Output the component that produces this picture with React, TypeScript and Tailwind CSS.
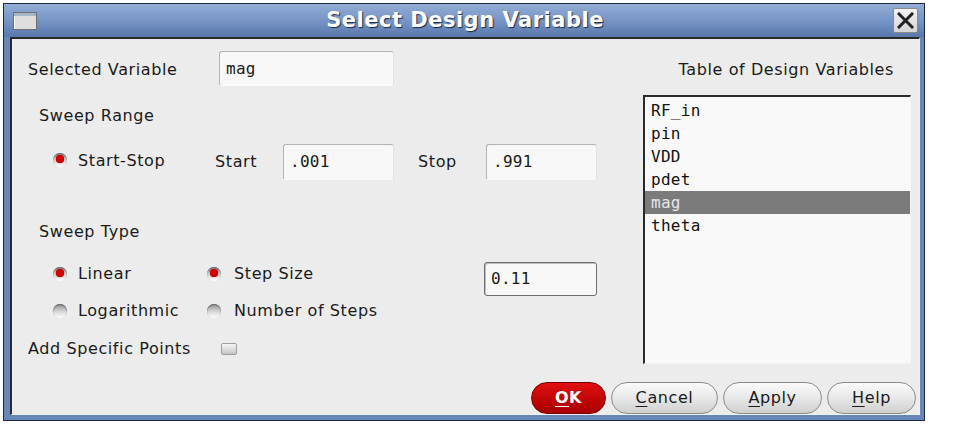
import React from 'react';

const mono = "font-['DejaVu_Sans_Mono','Liberation_Mono',monospace]";

function Radio({ checked }: { checked?: boolean }) {
  return (
    <span className="relative flex h-[14px] w-[14px] items-center justify-center rounded-full bg-linear-to-b from-[#8e8e8e] via-[#d2d2d2] to-white shadow-[inset_0_1px_1px_#666]">
      {checked && <span className="mb-[2px] h-[8px] w-[8px] rounded-full bg-[#d40000] shadow-[0_0_1px_#700]" />}
    </span>
  );
}

function Field({ value, width, dark }: { value: string; width: string; dark?: boolean }) {
  return (
    <div
      className={`${width} flex items-center rounded-[3px] bg-[#f8f8f8] pl-[6px] text-[16px] tracking-[0.3px] text-[#1a1a1a] ${mono} ${
        dark
          ? 'border border-[#6e6e6e] shadow-[inset_1px_1px_0_#bdbdbd]'
          : 'border border-t-[#b4b4b4] border-l-[#b4b4b4] border-r-[#e2e2e2] border-b-[#fafafa]'
      }`}
    >
      {value}
    </div>
  );
}

function Btn({ label, rest, width, primary }: { label: string; rest: string; width: string; primary?: boolean }) {
  return (
    <div
      className={`${width} flex h-[32px] items-center justify-center rounded-full text-[16px] tracking-[0.6px] ${
        primary
          ? 'border border-[#7a0000] bg-linear-to-b from-[#e01010] to-[#a80000] font-bold text-white'
          : 'border border-[#8c8c8c] bg-linear-to-b from-[#fafafa] via-[#e8e8e8] to-[#cfcfcf] text-[#1a1a1a]'
      }`}
    >
      <span className="underline underline-offset-[3px]">{label}</span>
      <span>{rest}</span>
    </div>
  );
}

export default function App() {
  const vars = ['RF_in', 'pin', 'VDD', 'pdet', 'mag', 'theta'];

  return (
    <div className="h-[424px] w-[968px] bg-white pl-[3px] pt-[3px] font-['DejaVu_Sans',sans-serif] text-[16px] tracking-[0.6px] text-[#1a1a1a]">
      <div className="flex h-[418px] w-[922px] flex-col border border-[#1e2a3c] bg-[#6887b9]">
        {/* title bar */}
        <div className="grid h-[33px] grid-cols-[33px_1fr_31px] items-center bg-linear-to-b from-[#93acd6] via-[#7895c6] to-[#5877ab]">
          <div className="ml-[9px] h-[18px] w-[24px] border border-[#6f6f6f] bg-[#dedede] shadow-[inset_1px_1px_0_#fff]">
            <div className="h-[3px] bg-[#a8b6cc]" />
          </div>
          <div className="text-center text-[21px] font-bold tracking-[0.5px] text-white [text-shadow:1px_1px_1px_#1b2a45]">
            Select Design Variable
          </div>
          <div className="flex h-[25px] w-[25px] items-center justify-center rounded-[2px] border border-[#8a8a8a] bg-linear-to-b from-[#f4f4f4] to-[#d4d4d4]">
            <svg width="17" height="17" viewBox="0 0 17 17">
              <path d="M2 2 L15 15 M15 2 L2 15" stroke="#222" strokeWidth="3" strokeLinecap="square" />
            </svg>
          </div>
        </div>

        {/* body */}
        <div className="mb-[5px] ml-[6px] mr-[4px] flex flex-1 flex-col border-b border-l-2 border-r border-t-2 border-b-[#f0f0f0] border-l-[#2a2a2a] border-r-[#f0f0f0] border-t-[#2a2a2a] bg-[#ececec]">
          <div className="flex">
            {/* left column */}
            <div className="flex flex-1 flex-col pl-[16px]">
              <div className="mt-[12px] flex h-[35px] items-center">
                <span className="mt-[2px] w-[191px]">Selected Variable</span>
                <Field value="mag" width="w-[175px] h-[35px]" />
              </div>

              <div className="ml-[11px] mt-[20px] flex h-[20px] items-center">Sweep Range</div>

              <div className="mt-[18px] flex h-[36px] items-center">
                <span className="-mt-[4px] ml-[25px] mr-[11px]">
                  <Radio checked />
                </span>
                <span className="-mt-[2px] w-[137px]">Start-Stop</span>
                <span className="w-[68px]">Start</span>
                <Field value=".001" width="w-[111px] h-[36px]" />
                <span className="ml-[24px] w-[68px]">Stop</span>
                <Field value=".991" width="w-[111px] h-[36px]" />
              </div>

              <div className="ml-[11px] mt-[42px] flex h-[20px] items-center">Sweep Type</div>

              <div className="mt-[20px] flex">
                <div className="ml-[25px] flex w-[154px] flex-col gap-[17px] pt-[2px]">
                  <div className="flex h-[20px] items-center gap-[11px]">
                    <Radio checked />
                    <span>Linear</span>
                  </div>
                  <div className="flex h-[20px] items-center gap-[11px]">
                    <Radio />
                    <span>Logarithmic</span>
                  </div>
                </div>
                <div className="flex w-[277px] flex-col gap-[17px] pt-[2px]">
                  <div className="flex h-[20px] items-center gap-[13px]">
                    <Radio checked />
                    <span>Step Size</span>
                  </div>
                  <div className="flex h-[20px] items-center gap-[13px]">
                    <Radio />
                    <span>Number of Steps</span>
                  </div>
                </div>
                <Field value="0.11" width="w-[113px] h-[34px]" dark />
              </div>

              <div className="mt-[18px] flex h-[20px] items-center">
                <span className="w-[193px]">Add Specific Points</span>
                <span className="h-[12px] w-[16px] rounded-[2px] border border-[#a0a0a0] bg-linear-to-b from-[#f6f6f6] to-[#c6c6c6]" />
              </div>
            </div>

            {/* right column */}
            <div className="flex w-[276px] flex-col items-end pr-[8px]">
              <div className="mr-[17px] mt-[21px] flex h-[20px] items-center">Table of Design Variables</div>
              <div
                className={`mt-[15px] h-[269px] w-[268px] border-b border-l-2 border-r border-t-2 border-b-[#f4f4f4] border-l-[#2a2a2a] border-r-[#f4f4f4] border-t-[#2a2a2a] bg-[#f9f9f9] pt-[2px] text-[16px] tracking-[0.3px] ${mono}`}
              >
                {vars.map((v) => (
                  <div
                    key={v}
                    className={`flex h-[23px] items-center pl-[6px] ${
                      v === 'mag' ? 'bg-[#7b7b7b] text-[#e6e6e6]' : 'text-[#111]'
                    }`}
                  >
                    {v}
                  </div>
                ))}
              </div>
            </div>
          </div>

          {/* buttons */}
          <div className="mt-[18px] flex justify-end gap-[5px] pr-[3px]">
            <Btn label="O" rest="K" width="w-[75px]" primary />
            <Btn label="C" rest="ancel" width="w-[107px]" />
            <Btn label="A" rest="pply" width="w-[99px]" />
            <Btn label="H" rest="elp" width="w-[89px]" />
          </div>
        </div>
      </div>
    </div>
  );
}
